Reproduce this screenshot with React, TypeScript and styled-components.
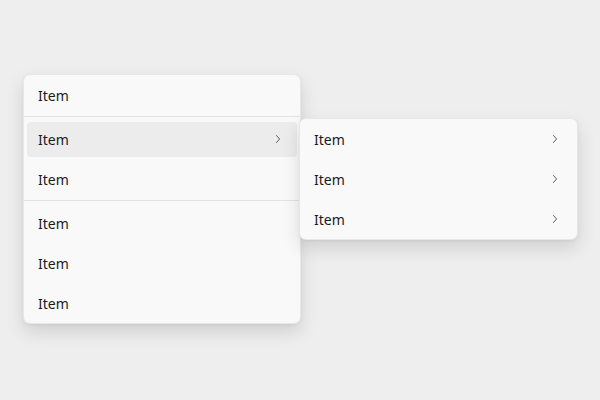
import styled, { createGlobalStyle } from "styled-components";

const GlobalStyle = createGlobalStyle`
    html, body {
        margin: 0;
        padding: 0;
        background: #eeeeee;
        font-family: "Noto Sans", "Open Sans", sans-serif;
    }
`;

const Page = styled.div`
    width: 600px;
    height: 400px;
    box-sizing: border-box;
    padding: 74px 0 0 23px;
`;

const Menu = styled.div<{ width: number }>`
    position: relative;
    width: ${props => props.width}px;
    box-sizing: border-box;
    background: #f9f9f9;
    border: 1px solid rgba(0, 0, 0, 0.07);
    border-radius: 7px;
    box-shadow: 0 8px 18px rgba(0, 0, 0, 0.13), 0 1px 3px rgba(0, 0, 0, 0.05);
`;

const SubMenu = styled(Menu)`
    position: absolute;
    top: -1px;
    left: calc(100% - 1px);
    z-index: 2;
`;

const Row = styled.div<{ active?: boolean }>`
    position: relative;
    height: 40px;
    display: flex;
    align-items: center;
    padding: 0 19px 0 14px;
    font-size: 14px;
    color: #1b1b1b;

    &::before {
        content: "";
        position: absolute;
        inset: 3px 3px 2px 3px;
        border-radius: 4px;
        background: ${props => props.active ? "#ececec" : "transparent"};
    }
`;

const Label = styled.span`
    position: relative;
    flex: 1;
`;

const Divider = styled.div`
    height: 1px;
    background: #e3e3e3;
    margin: 1px 0 2px;
`;

const ChevronBox = styled.span`
    position: relative;
    display: flex;
    align-items: center;
`;

function Chevron() {

    return <ChevronBox>
        <svg width="6" height="10" viewBox="0 0 6 10">
            <path d="M1.2 1.2 L4.6 5 L1.2 8.8" fill="none" stroke="#5c5c5c" strokeWidth="1" />
        </svg>
    </ChevronBox>
}

export default function App() {

    return <>
        <GlobalStyle />
        <Page>
            <Menu width={278}>
                <Row><Label>Item</Label></Row>
                <Divider />
                <Row active>
                    <Label>Item</Label>
                    <Chevron />
                    <SubMenu width={279}>
                        <Row><Label>Item</Label><Chevron /></Row>
                        <Row><Label>Item</Label><Chevron /></Row>
                        <Row><Label>Item</Label><Chevron /></Row>
                    </SubMenu>
                </Row>
                <Row><Label>Item</Label></Row>
                <Divider />
                <Row><Label>Item</Label></Row>
                <Row><Label>Item</Label></Row>
                <Row><Label>Item</Label></Row>
            </Menu>
        </Page>
    </>
}
